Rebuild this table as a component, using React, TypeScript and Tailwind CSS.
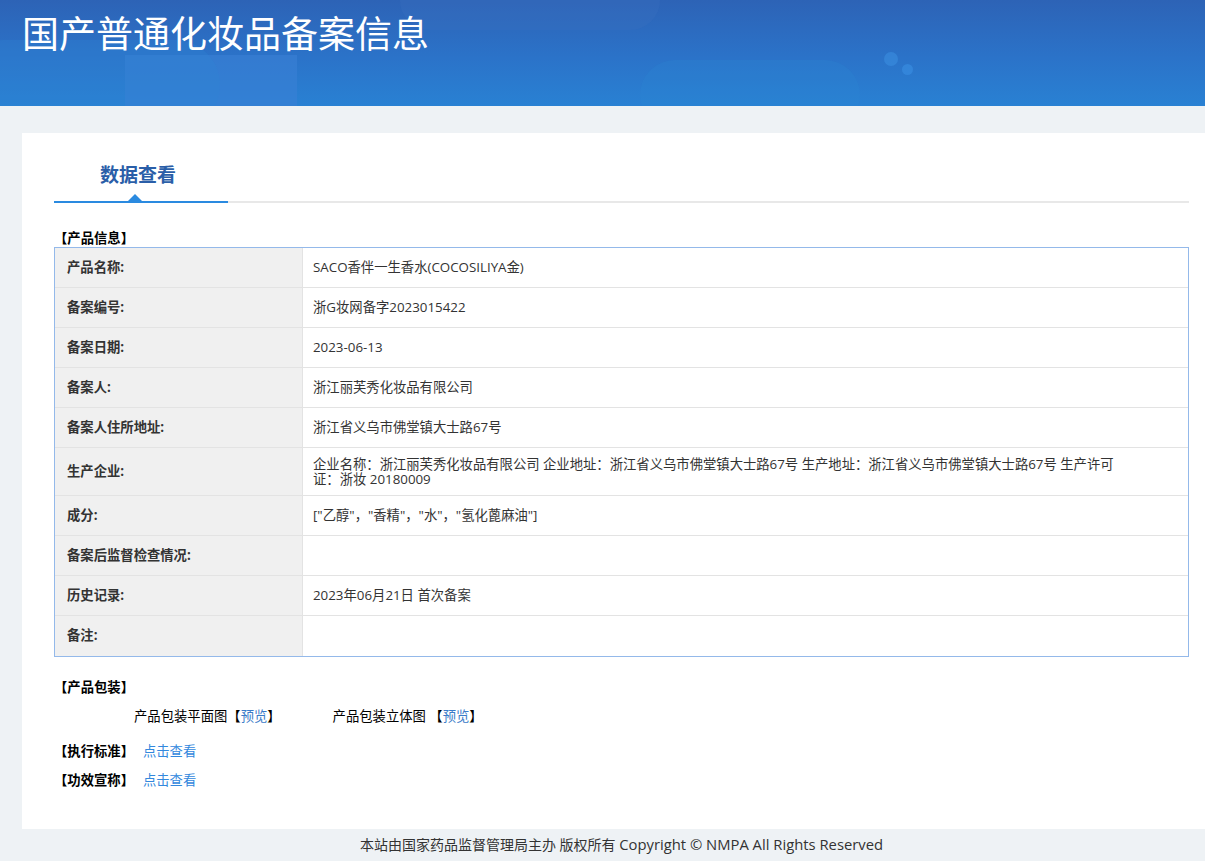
import React from "react";

const rows: { label: string; value: React.ReactNode; tall?: boolean }[] = [
  { label: "产品名称:", value: "SACO香伴一生香水(COCOSILIYA金)" },
  { label: "备案编号:", value: "浙G妆网备字2023015422" },
  { label: "备案日期:", value: "2023-06-13" },
  { label: "备案人:", value: "浙江丽芙秀化妆品有限公司" },
  { label: "备案人住所地址:", value: "浙江省义乌市佛堂镇大士路67号" },
  {
    label: "生产企业:",
    value: (
      <span className="block leading-[15px]">
        企业名称：浙江丽芙秀化妆品有限公司 企业地址：浙江省义乌市佛堂镇大士路67号 生产地址：浙江省义乌市佛堂镇大士路67号 生产许可
        <br />
        证：浙妆 20180009
      </span>
    ),
    tall: true,
  },
  { label: "成分:", value: '["乙醇"，"香精"，"水"，"氢化蓖麻油"]' },
  { label: "备案后监督检查情况:", value: "" },
  { label: "历史记录:", value: "2023年06月21日 首次备案" },
  { label: "备注:", value: "" },
];

export default function App() {
  return (
    <div
      className="w-[1205px] min-h-[861px] bg-[#eef2f5] text-[#333]"
      style={{ fontFamily: '"Open Sans", "Noto Sans CJK SC", sans-serif' }}
    >
      {/* Header */}
      <div className="relative h-[106px] overflow-hidden bg-[linear-gradient(180deg,#2d63b6_0%,#2b73c9_55%,#2981d3_100%)]">
        <div className="absolute left-[125px] top-[55px] h-[60px] w-[172px] bg-[#3b81d6] opacity-60" />
        <div className="absolute left-[-40px] top-[40px] h-[90px] w-[260px] rounded-full bg-[#2f86d4] opacity-30" />
        <div className="absolute left-[400px] top-[-30px] h-[60px] w-[260px] rounded-full bg-[#3a6fc0] opacity-30" />
        <div className="absolute left-[640px] top-[60px] h-[70px] w-[220px] rounded-full bg-[#2d86d2] opacity-25" />
        <div className="absolute left-[884px] top-[52px] h-[14px] w-[14px] rounded-full bg-[#3a8ee0] opacity-60" />
        <div className="absolute left-[902px] top-[64px] h-[11px] w-[11px] rounded-full bg-[#3a90e2] opacity-60" />
        <h1
          className="relative pl-[22px] pt-[8px] text-[37px] leading-[48px] font-normal text-white"
          style={{ fontFamily: '"Noto Sans CJK SC", sans-serif' }}
        >
          国产普通化妆品备案信息
        </h1>
      </div>

      {/* Card */}
      <div className="pt-[27px]">
        <div className="ml-[22px] h-[696px] bg-white pl-[32px] pr-[16px]">
          {/* Tab */}
          <div className="flex h-[70px] items-end">
            <div className="relative flex w-full">
              <div className="relative w-[174px] pb-[13px] text-center text-[19px] font-bold leading-[26px] text-[#2a5ea8] border-b-2 border-[#2a8ae0]">
                <span className="relative left-[-3px]">数据查看</span>
                <div className="absolute bottom-0 left-[74px] h-0 w-0 border-x-[7px] border-b-[7px] border-x-transparent border-b-[#2a8ae0]" />
              </div>
              <div className="flex-1 border-b-2 border-[#e8e8e8]" />
            </div>
          </div>

          {/* 产品信息 */}
          <div className="mt-[26px] text-[13.33px] font-bold leading-[18px] text-black">【产品信息】</div>
          <div className="border border-[#94b9ea]">
            {rows.map((r, i) => (
              <div
                key={i}
                className={`flex text-[13.33px] ${i < rows.length - 1 ? "border-b border-[#e3e3e3]" : ""} ${
                  r.tall ? "h-[48px]" : "h-[40px]"
                }`}
              >
                <div className="flex w-[248px] items-center border-r border-[#e3e3e3] bg-[#f0f0f0] pl-[12px] font-bold text-[#333]">
                  {r.label}
                </div>
                <div className="flex flex-1 items-center pl-[10px] text-[#333]">{r.value}</div>
              </div>
            ))}
          </div>

          {/* 产品包装 */}
          <div className="mt-[21px] text-[13.33px] font-bold leading-[18px] text-black">【产品包装】</div>
          <div className="mt-[11px] flex text-[13.33px] leading-[18px] text-black">
            <div className="ml-[80px]">
              产品包装平面图【<span className="text-[#3a7bc8]">预览</span>】
            </div>
            <div className="ml-[52px]">
              产品包装立体图 【<span className="text-[#3a7bc8]">预览</span>】
            </div>
          </div>
          <div className="mt-[17px] flex text-[13.33px] leading-[18px]">
            <span className="font-bold text-black">【执行标准】</span>
            <span className="ml-[9px] text-[#3388dd]">点击查看</span>
          </div>
          <div className="mt-[11px] flex text-[13.33px] leading-[18px]">
            <span className="font-bold text-black">【功效宣称】</span>
            <span className="ml-[9px] text-[#3388dd]">点击查看</span>
          </div>
        </div>
      </div>

      {/* Footer */}
      <div className="h-[32px] pl-[38px] text-center text-[14px] leading-[30px] text-[#333]">
        本站由国家药品监督管理局主办 版权所有 <span className="text-[14.8px]">Copyright © NMPA All Rights Reserved</span>
      </div>
    </div>
  );
}
